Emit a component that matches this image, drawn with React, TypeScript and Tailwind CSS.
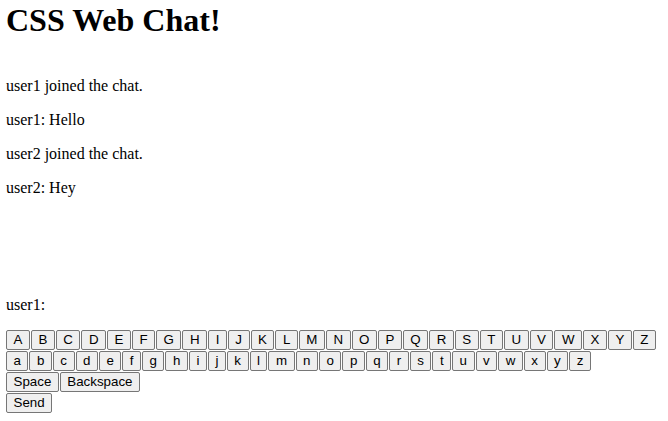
const messages = ['user1 joined the chat.', 'user1: Hello', 'user2 joined the chat.', 'user2: Hey'];

const upper = 'ABCDEFGHIJKLMNOPQRSTUVWXYZ'.split('');
const lower = 'abcdefghijklmnopqrstuvwxyz'.split('');

function Key({ label }: { label: string }) {
  return (
    <button
      type="button"
      className="border border-[#767676] rounded-[2px] bg-[#efefef] px-[6.5px] py-px text-[13.333px] leading-[16px] text-black font-['Liberation_Sans',Arial,sans-serif] whitespace-nowrap"
    >
      {label}
    </button>
  );
}

export default function App() {
  return (
    <div className="min-h-screen bg-white text-black px-[6px] pt-[2px] font-['Liberation_Serif','Times_New_Roman',serif]">
      <h1 className="text-[32px] font-bold leading-[37px]">CSS Web Chat!</h1>

      {/* Chat log */}
      <div className="mt-[38px] h-[219px] flex flex-col gap-4">
        {messages.map((m) => (
          <p key={m} className="text-[16px] leading-[18px]">
            {m}
          </p>
        ))}
      </div>

      <p className="text-[16px] leading-[18px]">user1:</p>

      {/* Keyboard */}
      <div className="mt-4 flex flex-col gap-px">
        <div className="flex gap-px">
          {upper.map((c) => (
            <Key key={c} label={c} />
          ))}
        </div>
        <div className="flex gap-px">
          {lower.map((c) => (
            <Key key={c} label={c} />
          ))}
        </div>
        <div className="flex gap-px">
          <Key label="Space" />
          <Key label="Backspace" />
        </div>
        <div className="flex gap-px">
          <Key label="Send" />
        </div>
      </div>
    </div>
  );
}
